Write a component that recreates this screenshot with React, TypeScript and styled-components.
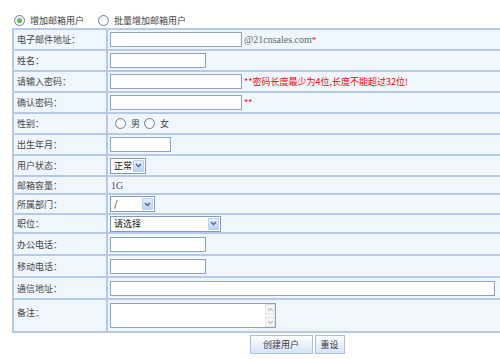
import styled, { createGlobalStyle } from "styled-components";

const GlobalStyle = createGlobalStyle`
  html, body {
    margin: 0;
    padding: 0;
    overflow: hidden;
    background: #fff;
  }
  body {
    font-family: "Noto Sans CJK SC", "Noto Sans", sans-serif;
    font-size: 9px;
    color: #444;
  }
`;

const Page = styled.div`
  width: 570px;
  padding-left: 12px;
`;

const ModeBar = styled.div`
  display: flex;
  align-items: center;
  gap: 14px;
  height: 28px;
  padding: 13px 0 0 2px;
  box-sizing: border-box;
`;

const Option = styled.label`
  display: flex;
  align-items: center;
  gap: 5px;
  color: #444;
`;

const Radio = styled.span<{ $checked?: boolean }>`
  position: relative;
  display: inline-block;
  width: 11px;
  height: 11px;
  border-radius: 50%;
  border: 1px solid #6d819b;
  box-sizing: border-box;
  background: radial-gradient(circle at 60% 60%, #ffffff 30%, #e4e8ee 100%);
  &::after {
    content: "";
    display: ${({ $checked }) => ($checked ? "block" : "none")};
    position: absolute;
    inset: 2px;
    border-radius: 50%;
    background: radial-gradient(circle at 40% 40%, #6fd66f, #2b9a2b);
  }
`;

const FormTable = styled.table`
  border-collapse: collapse;
  width: 570px;
  background: #eff6fe;
`;

const Row = styled.tr<{ $h: number }>`
  height: ${({ $h }) => $h}px;
`;

const LabelCell = styled.td<{ $top?: boolean }>`
  width: 89px;
  border: 2px solid #b5caeb;
  padding: ${({ $top }) => ($top ? "6px 0 0 3px" : "0 0 0 3px")};
  vertical-align: ${({ $top }) => ($top ? "top" : "middle")};
  white-space: nowrap;
  color: #444;
`;

const FieldCell = styled.td`
  border: 2px solid #b5caeb;
  padding: 0 0 0 2px;
  vertical-align: middle;
  white-space: nowrap;
`;

const Field = styled.div`
  display: flex;
  align-items: center;
  gap: 2px;
`;

const TextInput = styled.input<{ $w: number }>`
  width: ${({ $w }) => $w}px;
  height: 15px;
  box-sizing: border-box;
  border: 1px solid #8ea3bd;
  background: #fff;
  padding: 0 2px;
  margin: 0;
  font-size: 9px;
`;

const Suffix = styled.span`
  font-family: "Liberation Serif", serif;
  font-size: 10px;
  color: #666;
`;

const Hint = styled.span`
  color: #f00;
  font-size: 9px;
`;

const PlainValue = styled.span`
  font-family: "Liberation Serif", serif;
  font-size: 10px;
  color: #555;
  padding-left: 1px;
`;

const Choice = styled.span`
  display: flex;
  align-items: center;
  gap: 5px;
  margin-left: 5px;
  color: #444;
  & + & {
    margin-left: 2px;
  }
`;

const SelectBox = styled.div<{ $w: number }>`
  display: flex;
  width: ${({ $w }) => $w}px;
  height: 16px;
  box-sizing: border-box;
  border: 1px solid #7f9db9;
  background: #fff;
`;

const SelectText = styled.span`
  flex: 1;
  padding-left: 3px;
  line-height: 14px;
  color: #111;
`;

const SelectArrow = styled.span`
  display: flex;
  align-items: center;
  justify-content: center;
  width: 11px;
  margin: 1px;
  border: 1px solid #bcd0f2;
  box-sizing: border-box;
  background: linear-gradient(#e4edfc, #bcd1f4);
`;

const TextArea = styled.div`
  display: flex;
  justify-content: flex-end;
  width: 166px;
  height: 25px;
  margin: 3px 0;
  box-sizing: border-box;
  border: 1px solid #8ea3bd;
  background: #fff;
`;

const ScrollTrack = styled.div`
  display: flex;
  flex-direction: column;
  justify-content: space-between;
  width: 10px;
  background: #f4f4f0;
`;

const ScrollButton = styled.span`
  display: flex;
  align-items: center;
  justify-content: center;
  height: 10px;
  border: 1px solid #e2e3ea;
  box-sizing: border-box;
  background: #f6f6f4;
`;

const Actions = styled.div`
  display: flex;
  justify-content: center;
  gap: 2px;
  margin-top: 2px;
`;

const ActionButton = styled.button<{ $w: number }>`
  width: ${({ $w }) => $w}px;
  height: 19px;
  padding: 0;
  border: 1px solid #a9bfdc;
  background: linear-gradient(#ffffff, #d4e4f7);
  font-family: inherit;
  font-size: 9px;
  color: #333;
`;

const Chevron = ({ color = "#4a6596", up = false }: { color?: string; up?: boolean }) => (
  <svg width="7" height="5" viewBox="0 0 7 5">
    <path
      d={up ? "M1 4 L3.5 1.5 L6 4" : "M1 1 L3.5 3.5 L6 1"}
      fill="none"
      stroke={color}
      strokeWidth="1.4"
    />
  </svg>
);

const Select = ({ w, value }: { w: number; value: string }) => (
  <SelectBox $w={w}>
    <SelectText>{value}</SelectText>
    <SelectArrow>
      <Chevron />
    </SelectArrow>
  </SelectBox>
);

export default function App() {
  return (
    <Page>
      <GlobalStyle />
      <ModeBar>
        <Option>
          <Radio $checked />
          增加邮箱用户
        </Option>
        <Option>
          <Radio />
          批量增加邮箱用户
        </Option>
      </ModeBar>
      <FormTable>
        <tbody>
          <Row $h={21}>
            <LabelCell>电子邮件地址：</LabelCell>
            <FieldCell>
              <Field>
                <TextInput $w={132} />
                <Suffix>
                  @21cnsales.com<Hint>*</Hint>
                </Suffix>
              </Field>
            </FieldCell>
          </Row>
          <Row $h={21}>
            <LabelCell>姓名：</LabelCell>
            <FieldCell>
              <TextInput $w={96} />
            </FieldCell>
          </Row>
          <Row $h={21}>
            <LabelCell>请输入密码：</LabelCell>
            <FieldCell>
              <Field>
                <TextInput $w={132} />
                <Hint>**密码长度最少为4位,长度不能超过32位!</Hint>
              </Field>
            </FieldCell>
          </Row>
          <Row $h={21}>
            <LabelCell>确认密码：</LabelCell>
            <FieldCell>
              <Field>
                <TextInput $w={132} />
                <Hint>**</Hint>
              </Field>
            </FieldCell>
          </Row>
          <Row $h={21}>
            <LabelCell>性别：</LabelCell>
            <FieldCell>
              <Field>
                <Choice>
                  <Radio />男
                </Choice>
                <Choice>
                  <Radio />女
                </Choice>
              </Field>
            </FieldCell>
          </Row>
          <Row $h={21}>
            <LabelCell>出生年月：</LabelCell>
            <FieldCell>
              <TextInput $w={61} />
            </FieldCell>
          </Row>
          <Row $h={21}>
            <LabelCell>用户状态：</LabelCell>
            <FieldCell>
              <Select w={36} value="正常" />
            </FieldCell>
          </Row>
          <Row $h={18}>
            <LabelCell>邮箱容量：</LabelCell>
            <FieldCell>
              <PlainValue>1G</PlainValue>
            </FieldCell>
          </Row>
          <Row $h={20}>
            <LabelCell>所属部门：</LabelCell>
            <FieldCell>
              <Select w={45} value="/" />
            </FieldCell>
          </Row>
          <Row $h={19}>
            <LabelCell>职位：</LabelCell>
            <FieldCell>
              <Select w={111} value="请选择" />
            </FieldCell>
          </Row>
          <Row $h={22}>
            <LabelCell>办公电话：</LabelCell>
            <FieldCell>
              <TextInput $w={96} />
            </FieldCell>
          </Row>
          <Row $h={22}>
            <LabelCell>移动电话：</LabelCell>
            <FieldCell>
              <TextInput $w={96} />
            </FieldCell>
          </Row>
          <Row $h={22}>
            <LabelCell>通信地址：</LabelCell>
            <FieldCell>
              <TextInput $w={385} />
            </FieldCell>
          </Row>
          <Row $h={31}>
            <LabelCell $top>备注：</LabelCell>
            <FieldCell>
              <TextArea>
                <ScrollTrack>
                  <ScrollButton>
                    <Chevron color="#c4c6cc" up />
                  </ScrollButton>
                  <ScrollButton>
                    <Chevron color="#c4c6cc" />
                  </ScrollButton>
                </ScrollTrack>
              </TextArea>
            </FieldCell>
          </Row>
        </tbody>
      </FormTable>
      <Actions>
        <ActionButton $w={63}>创建用户</ActionButton>
        <ActionButton $w={30}>重设</ActionButton>
      </Actions>
    </Page>
  );
}
